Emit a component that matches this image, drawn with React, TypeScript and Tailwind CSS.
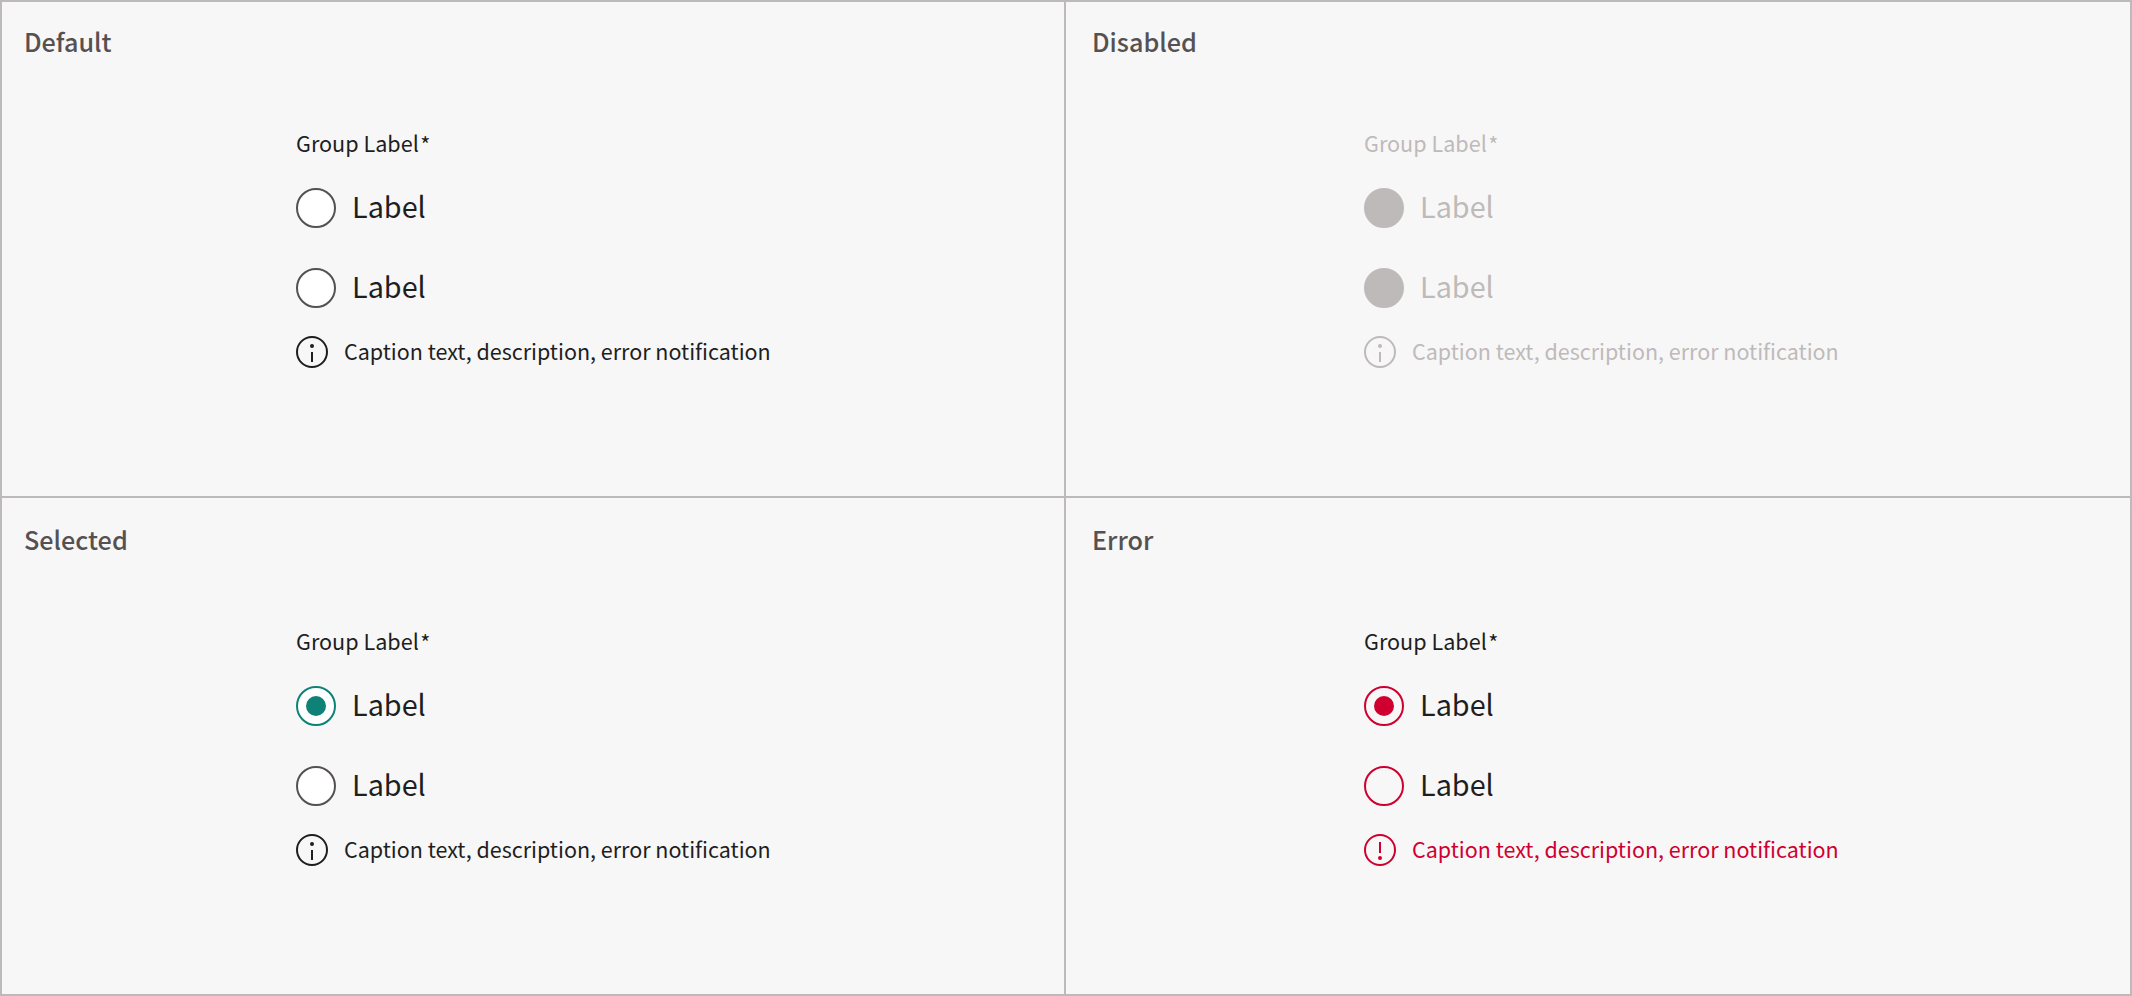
type Variant = 'default' | 'disabled' | 'selected' | 'error';

const text: Record<Variant, string> = {
  default: 'text-[#1e1e1e]',
  disabled: 'text-[#bfbaba]',
  selected: 'text-[#1e1e1e]',
  error: 'text-[#1e1e1e]',
};

const caption: Record<Variant, string> = {
  ...text,
  error: 'text-[#cf0030]',
};

function Radio({ variant, checked }: { variant: Variant; checked: boolean }) {
  let look = 'border-[#555152] bg-white';
  let dot = 'bg-[#0e8276]';
  if (variant === 'disabled') look = 'border-[#bfbaba] bg-[#bfbaba]';
  if (variant === 'selected' && checked) look = 'border-[#0e8276] bg-white';
  if (variant === 'error') {
    look = 'border-[#cf0030]';
    dot = 'bg-[#cf0030]';
  }
  return (
    <span className={`flex size-10 shrink-0 items-center justify-center rounded-full border-2 ${look}`}>
      {checked && <span className={`size-5 rounded-full ${dot}`} />}
    </span>
  );
}

function StatusIcon({ error }: { error: boolean }) {
  return (
    <svg width="32" height="32" viewBox="0 0 32 32" fill="none" className="shrink-0">
      <circle cx="16" cy="16" r="15" stroke="currentColor" strokeWidth="2" />
      {error ? (
        <>
          <path d="M16 8V19" stroke="currentColor" strokeWidth="2" />
          <circle cx="16" cy="24" r="2" fill="currentColor" />
        </>
      ) : (
        <>
          <circle cx="16" cy="10" r="2" fill="currentColor" />
          <path d="M16 16V26" stroke="currentColor" strokeWidth="2" />
        </>
      )}
    </svg>
  );
}

function Cell({ title, variant, pad }: { title: string; variant: Variant; pad: string }) {
  const hasSelection = variant === 'selected' || variant === 'error';
  return (
    <section className={`bg-[#f7f7f7] ${pad}`}>
      <h2 className="text-[25.2px] leading-10 font-medium text-[#555152]">{title}</h2>
      <div className="mt-[62px] pl-[272px]">
        <div className={`flex h-10 gap-[1.5px] text-[21.6px] leading-10 ${text[variant]}`}>
          <span>Group Label</span>
          <span className="pt-px">*</span>
        </div>
        <div className="mt-[25px] flex flex-col gap-10">
          {[hasSelection, false].map((checked, i) => (
            <div key={i} className="flex h-10 items-center gap-4">
              <Radio variant={variant} checked={checked} />
              <span className={`pb-[5px] text-[28.8px] leading-9 ${text[variant]}`}>Label</span>
            </div>
          ))}
        </div>
        <div className={`mt-7 flex h-8 items-center gap-4 ${caption[variant]}`}>
          <StatusIcon error={variant === 'error'} />
          <span className="pb-[3px] text-[21.5px] leading-8 whitespace-nowrap">
            Caption text, description, error notification
          </span>
        </div>
      </div>
    </section>
  );
}

export default function App() {
  return (
    <main className="grid h-[996px] w-[2132px] grid-cols-[1062px_1064px] grid-rows-[494px_496px] gap-0.5 bg-[#bfbaba] p-0.5 font-['Noto_Sans_CJK_SC',sans-serif]">
      <Cell title="Default" variant="default" pad="pt-[19px] pl-[22px]" />
      <Cell title="Disabled" variant="disabled" pad="pt-[19px] pl-[26px]" />
      <Cell title="Selected" variant="selected" pad="pt-[21px] pl-[22px]" />
      <Cell title="Error" variant="error" pad="pt-[21px] pl-[26px]" />
    </main>
  );
}
